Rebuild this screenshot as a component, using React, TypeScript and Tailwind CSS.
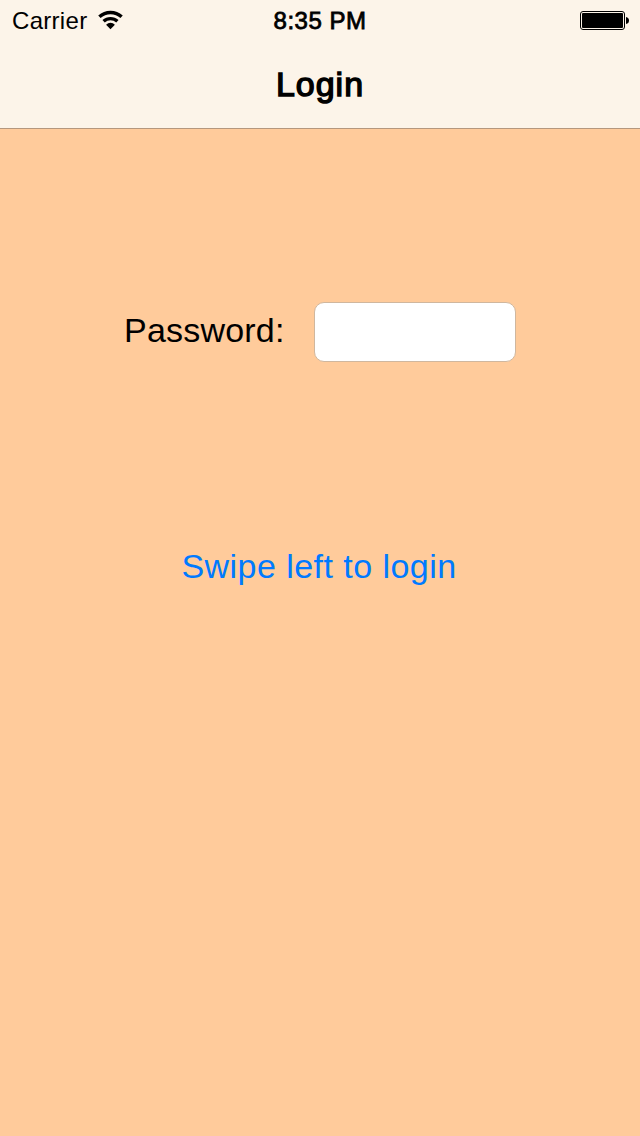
import React from "react";

function WifiIcon() {
  return (
    <svg width="26" height="20" viewBox="0 0 26 20" fill="none" stroke="#000" strokeWidth="3.4">
      <path d="M1.4 6.8 A16.4 16.4 0 0 1 23.6 6.8" />
      <path d="M5.6 11.3 A10.2 10.2 0 0 1 19.4 11.3" />
      <path d="M12.5 19.2 L8.1 14.7 A6.2 6.2 0 0 1 16.9 14.7 Z" fill="#000" stroke="none" />
    </svg>
  );
}

function BatteryIcon() {
  return (
    <svg width="50" height="20" viewBox="0 0 50 20">
      <rect x="0.5" y="1.5" width="44" height="18" rx="2.5" fill="none" stroke="#000" />
      <rect x="2" y="3" width="41" height="15" rx="1" fill="#000" />
      <path d="M46 7 Q49 7.5 49 10.5 Q49 13.5 46 14 Z" fill="#000" />
    </svg>
  );
}

export default function App() {
  return (
    <main className="flex h-[1136px] w-[640px] flex-col overflow-hidden bg-[#ffcb9b] font-['Liberation_Sans',sans-serif] text-black">
      <header className="h-[129px] border-b border-[#b5977d] bg-[#fcf4e9]">
        <div className="grid h-10 grid-cols-3 items-center pr-[10px] pl-3 leading-none">
          <div className="flex items-center gap-[11px]">
            <span className="pt-0.5 text-[24px] tracking-[0.3px]">Carrier</span>
            <WifiIcon />
          </div>
          <span className="pt-0.5 pr-0.5 text-center text-[24px] tracking-[0.5px] [-webkit-text-stroke:0.8px_black]">8:35 PM</span>
          <div className="flex justify-end"><BatteryIcon /></div>
        </div>
        <h1 className="flex h-[88px] items-center justify-center text-[34px] font-normal tracking-[1px] [-webkit-text-stroke:1.4px_black]">Login</h1>
      </header>
      <label className="mt-[173px] ml-[124px] flex h-[60px] items-center">
        <span className="w-[190px] pb-1 text-[34px] leading-none tracking-[0.2px]">Password:</span>
        <input type="password" className="h-[60px] w-[202px] rounded-[10px] border border-[#d0b79e] bg-white" />
      </label>
      <button className="mt-[174px] h-[60px] pr-0.5 text-[34px] tracking-[0.45px] text-[#007aff]">Swipe left to login</button>
    </main>
  );
}
